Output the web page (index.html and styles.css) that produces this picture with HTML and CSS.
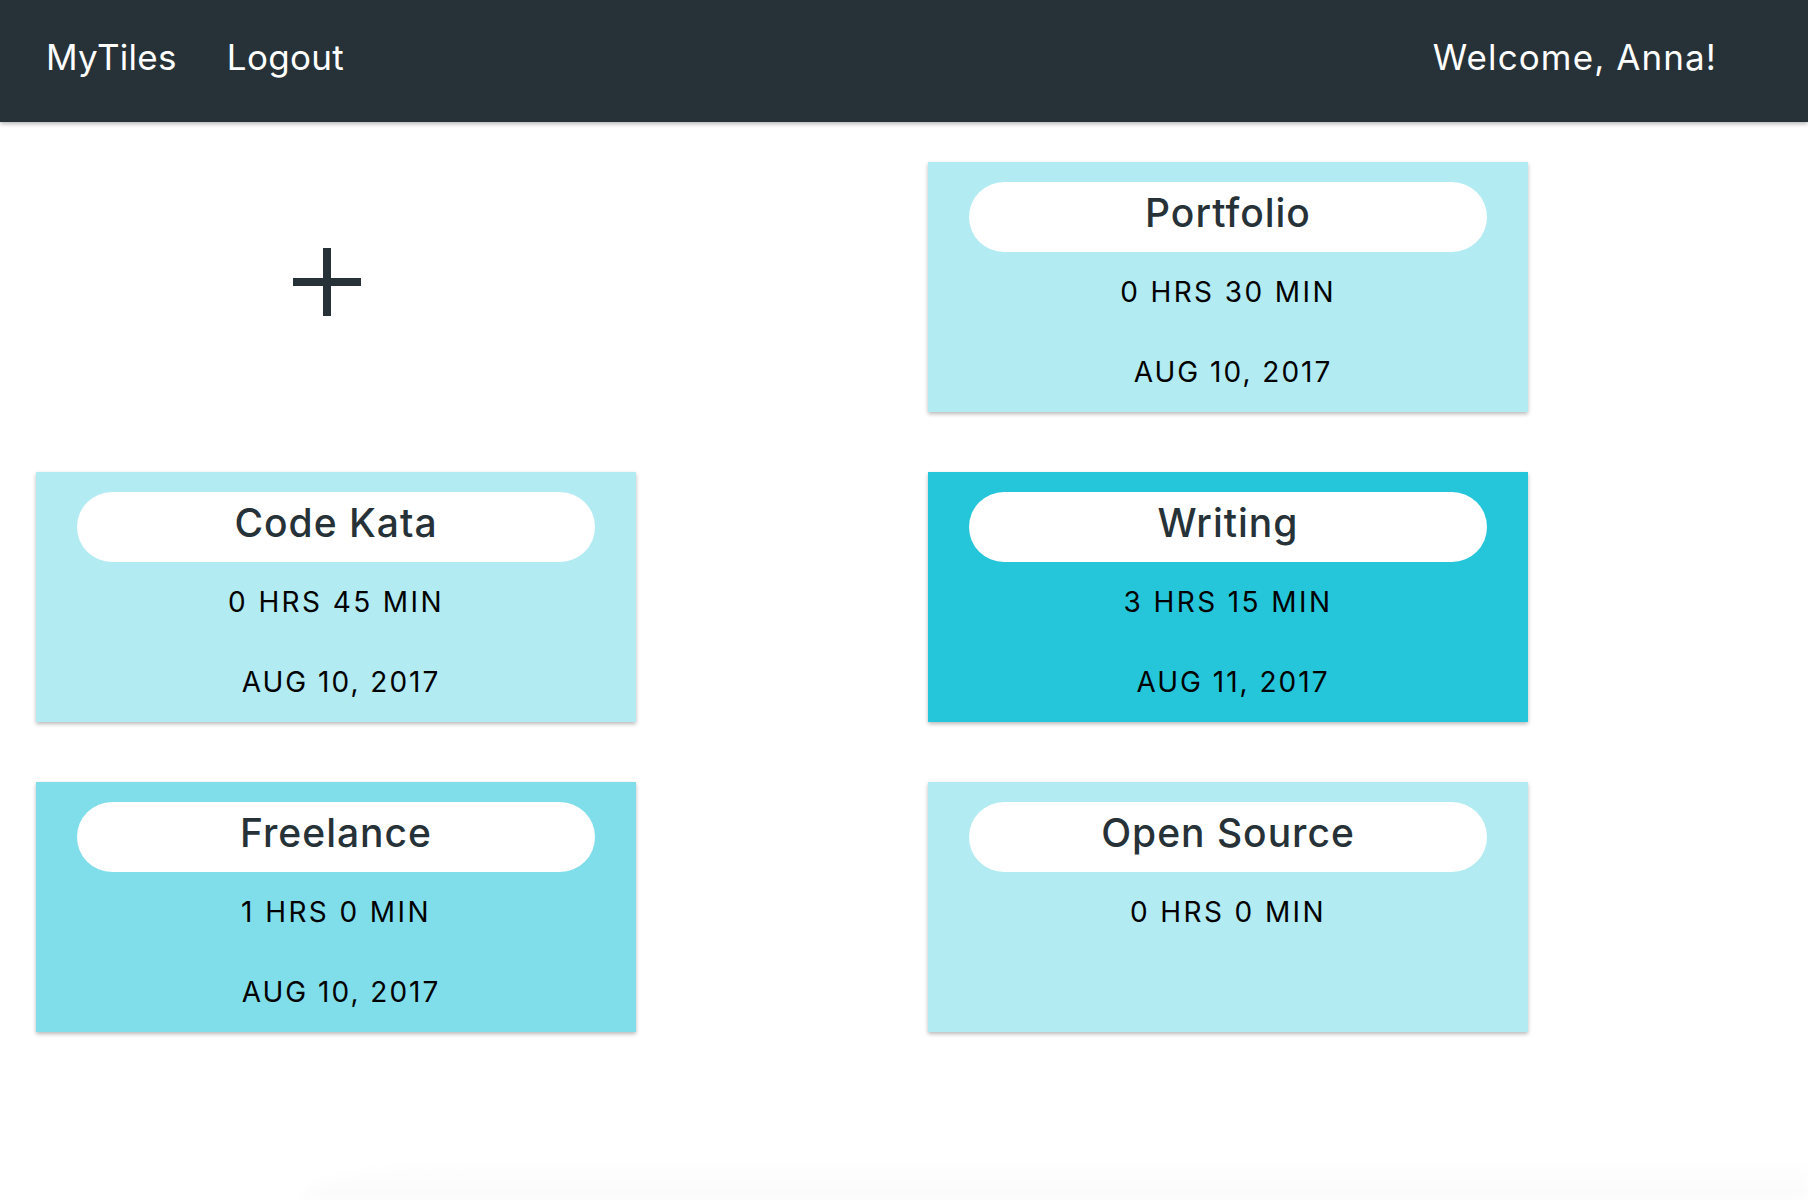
FILE: index.html
```html
<!DOCTYPE html>
<html lang="en">
<head>
<meta charset="utf-8">
<title>MyTiles</title>
<link rel="stylesheet" href="styles.css">
</head>
<body>
<header class="topbar">
  <nav class="nav">
    <a class="nav-link" href="#">MyTiles</a>
    <a class="nav-link" href="#">Logout</a>
  </nav>
  <div class="welcome">Welcome, Anna!</div>
</header>
<main class="grid">
  <div class="add-cell">
    <svg class="plus" width="68" height="68" viewBox="0 0 68 68" aria-label="Add tile">
      <rect x="30" y="0" width="8" height="68" fill="#263238"/>
      <rect x="0" y="30" width="68" height="8" fill="#263238"/>
    </svg>
  </div>
  <section class="tile tile-light">
    <h2 class="tile-title">Portfolio</h2>
    <p class="tile-time">0 HRS 30 MIN</p>
    <p class="tile-date">AUG 10, 2017</p>
  </section>
  <section class="tile tile-light">
    <h2 class="tile-title">Code Kata</h2>
    <p class="tile-time">0 HRS 45 MIN</p>
    <p class="tile-date">AUG 10, 2017</p>
  </section>
  <section class="tile tile-strong">
    <h2 class="tile-title">Writing</h2>
    <p class="tile-time">3 HRS 15 MIN</p>
    <p class="tile-date">AUG 11, 2017</p>
  </section>
  <section class="tile tile-mid">
    <h2 class="tile-title">Freelance</h2>
    <p class="tile-time">1 HRS 0 MIN</p>
    <p class="tile-date">AUG 10, 2017</p>
  </section>
  <section class="tile tile-light">
    <h2 class="tile-title">Open Source</h2>
    <p class="tile-time">0 HRS 0 MIN</p>
  </section>
</main>
<div class="footer-glow"></div>
</body>
</html>
```
FILE: styles.css
```css
* { box-sizing: border-box; }

html, body {
  margin: 0;
  padding: 0;
}

body {
  background: #ffffff;
  font-family: Inter, "Open Sans", "Liberation Sans", sans-serif;
  color: #263238;
  min-height: 100vh;
  display: flex;
  flex-direction: column;
  overflow: hidden;
}

.topbar {
  height: 122px;
  background: #263238;
  display: flex;
  align-items: center;
  justify-content: space-between;
  padding: 0 91px 8px 46px;
  box-shadow: 0 2px 4px rgba(0, 0, 0, 0.28);
  position: relative;
  z-index: 1;
}

.nav {
  display: flex;
  gap: 50px;
}

.nav-link,
.welcome {
  color: #ffffff;
  text-decoration: none;
  font-size: 35px;
  font-weight: 400;
  letter-spacing: 0.3px;
}

.welcome {
  letter-spacing: 1.1px;
}

.grid {
  display: grid;
  grid-template-columns: 600px 600px;
  grid-auto-rows: 250px;
  column-gap: 292px;
  row-gap: 60px;
  padding: 40px 0 0 36px;
}

.add-cell {
  display: flex;
  align-items: center;
  justify-content: center;
  padding: 0 18px 10px 0;
}

.tile {
  height: 250px;
  padding: 20px 41px 0;
  box-shadow: 0 2px 4px rgba(0, 0, 0, 0.28);
  display: flex;
  flex-direction: column;
  align-items: center;
}

.tile-light { background: #b2ebf2; }
.tile-mid { background: #80deea; }
.tile-strong { background: #26c6da; }

.tile-title {
  margin: 0;
  width: 100%;
  height: 70px;
  border-radius: 35px;
  background: #ffffff;
  color: #263238;
  font-size: 39px;
  font-weight: 500;
  letter-spacing: 1px;
  display: flex;
  align-items: center;
  justify-content: center;
  padding-bottom: 9px;
}

.tile-time,
.tile-date {
  margin: 0;
  height: 40px;
  line-height: 40px;
  font-size: 28px;
  letter-spacing: 2.4px;
  color: #000000;
}

.tile-time {
  margin-top: 20px;
}

.tile-date {
  margin-top: 40px;
  padding-left: 10px;
  letter-spacing: 2px;
}

.footer-glow {
  margin-top: auto;
  margin-left: 300px;
  height: 36px;
  border-top-left-radius: 160px 36px;
  background: linear-gradient(to bottom, #fefefe, #fbfbfb);
  filter: blur(4px);
}
```
